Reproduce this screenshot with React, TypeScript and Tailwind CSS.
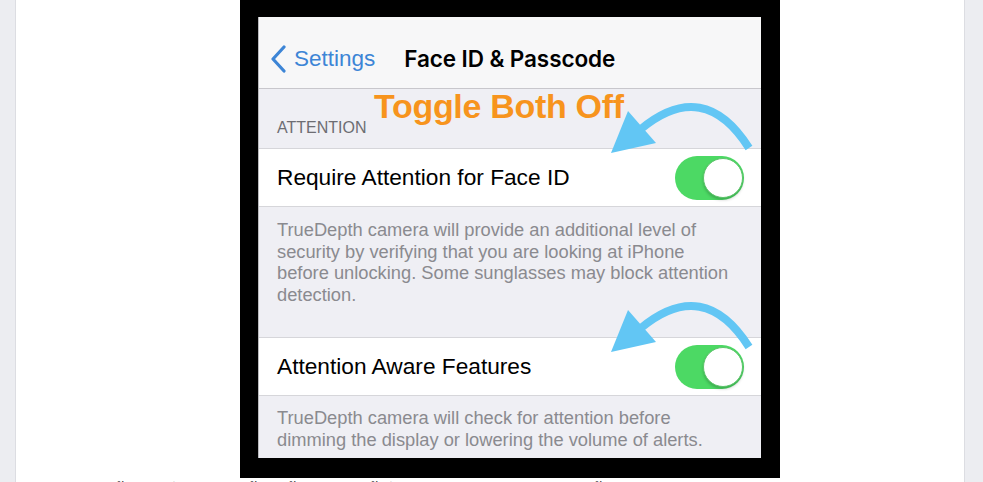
import React from "react";

function Toggle() {
  return (
    <div className="relative h-[44px] w-[69px] shrink-0 rounded-full bg-[#4cd964]">
      <div className="absolute right-[1px] top-[2px] h-[40px] w-[40px] rounded-full border border-[#5cc46a] bg-white shadow-[0_2px_3px_rgba(0,0,0,0.2)]" />
    </div>
  );
}

function Arrow({ dy }: { dy: number }) {
  return (
    <g transform={`translate(0 ${dy})`}>
      <path d="M490 131 Q445 60 382 112" fill="none" stroke="#62c6f4" strokeWidth="8" />
      <polygon points="352,136 369,94 397,126" fill="#62c6f4" />
    </g>
  );
}

export default function App() {
  return (
    <div className="flex h-[482px] w-[983px] overflow-hidden bg-[#ecedf1] font-['Liberation_Sans',Arial,sans-serif]">
      <div className="ml-[15px] w-[950px] border-x border-[#dcdde2] bg-white">
        <div className="ml-[224px] h-[478px] w-[540px] bg-black pl-[18px] pt-[17px]">
          <div className="relative flex h-[441px] w-[503px] flex-col border-l border-[#b9b9bd] bg-[#efeff4]">
            {/* nav bar */}
            <div className="flex h-[72px] shrink-0 items-center border-b border-[#c8c7cc] bg-[#f7f7f8] pl-[11px] pt-[13px]">
              <svg width="18" height="28" viewBox="0 0 18 28" className="mr-[6px]">
                <polyline points="14,2 3,14 14,26" fill="none" stroke="#3d85d6" strokeWidth="3.2" strokeLinecap="round" strokeLinejoin="round" />
              </svg>
              <span className="text-[22.5px] text-[#3d85d6]">Settings</span>
              <span className="ml-[29px] font-['Inter',sans-serif] text-[22.5px] font-semibold tracking-[-0.1px] text-black">
                Face ID &amp; Passcode
              </span>
            </div>

            {/* section header */}
            <div className="flex h-[59px] shrink-0 items-end pb-[8px] pl-[18px] text-[16px] uppercase text-[#6d6d72]">
              Attention
            </div>

            <div className="flex h-[59px] shrink-0 items-center justify-between border-y border-[#d6d6da] bg-white pl-[18px] pr-[17px]">
              <span className="text-[22.7px] text-black">Require Attention for Face ID</span>
              <Toggle />
            </div>
            <div className="h-[130px] shrink-0 pl-[18px] pt-[12px] text-[18.3px] leading-[21.7px] text-[#8a8a8f]">
              TrueDepth camera will provide an additional level of
              <br />
              security by verifying that you are looking at iPhone
              <br />
              before unlocking. Some sunglasses may block attention
              <br />
              detection.
            </div>

            <div className="flex h-[59px] shrink-0 items-center justify-between border-y border-[#d6d6da] bg-white pl-[18px] pr-[17px]">
              <span className="text-[22.7px] text-black">Attention Aware Features</span>
              <Toggle />
            </div>
            <div className="pl-[18px] pt-[11px] text-[18.3px] leading-[21.7px] text-[#8a8a8f]">
              TrueDepth camera will check for attention before
              <br />
              dimming the display or lowering the volume of alerts.
            </div>

            <div className="absolute left-[115px] top-[72px] text-[34px] font-bold leading-none tracking-[-0.3px] text-[#f7941d]">
              Toggle Both Off
            </div>
            <svg className="absolute inset-0" width="503" height="441" viewBox="0 0 503 441">
              <Arrow dy={0} />
              <Arrow dy={199} />
            </svg>
          </div>
        </div>
        <p className="mt-[3px] pl-[96px] text-[16px] leading-[24px] text-[#333]">
          ขั้นตอนที่ 2: ปิดการตั้งค่าทั้งสองอย่างนี้เพื่อให้ Face ID ปลดล็อกได้เร็วขึ้น
        </p>
      </div>
    </div>
  );
}
